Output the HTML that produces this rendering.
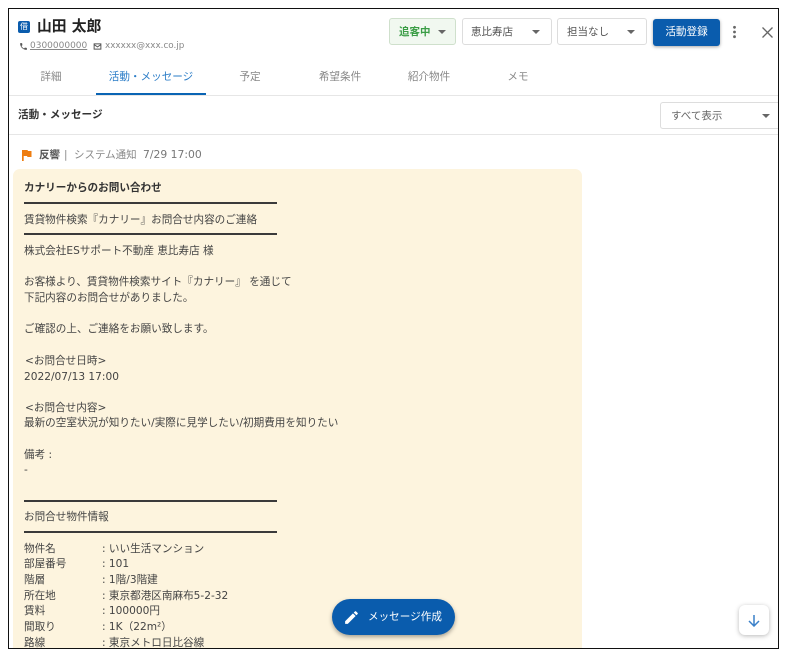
<!DOCTYPE html>
<html lang="ja"><head><meta charset="utf-8">
<style>
html,body{margin:0;padding:0;background:#fff}
body{width:787px;height:657px;position:relative;overflow:hidden;font-family:"DejaVu Sans","Noto Sans CJK JP",sans-serif;color:#333}
.a{position:absolute;white-space:nowrap}
#f{position:absolute;left:8px;top:8px;width:769px;height:639px;border:1.5px solid #111;overflow:hidden}
.sel{position:absolute;top:18px;height:27px;box-sizing:border-box;border:1px solid #ddd;border-radius:3px;background:#fff;font-size:10.5px;line-height:26px;color:#555;padding-left:8px}
.car{position:absolute;width:0;height:0;border-left:4px solid transparent;border-right:4px solid transparent;border-top:4px solid #666}
.tab{position:absolute;top:69px;font-size:10.6px;line-height:16px;color:#888;transform:translateX(-50%);white-space:nowrap}
.hr{position:absolute;height:1px;background:#e6e6e6}
.rule{position:absolute;left:24px;width:253px;height:2px;background:#3a3a3a}
#msg div{position:absolute;left:24px;font-size:10.6px;line-height:16px;color:#444;white-space:pre}
</style></head><body>
<div class="a" style="left:13px;top:169px;width:569px;height:480px;background:#fdf4de;border-radius:7px 7px 0 0"></div>

<div class="a" style="left:18px;top:21px;width:12px;height:12px;background:#0a5cad;border-radius:2px;color:#fff;font-size:8px;line-height:12px;text-align:center">借</div>
<div class="a" style="left:37px;top:17px;font-size:14.800px;line-height:20px;font-weight:bold;color:#222">山田 太郎</div>
<svg class="a" style="left:19px;top:42px" width="9" height="9" viewBox="0 0 24 24"><path fill="#555" d="M6.6 10.8c1.4 2.8 3.8 5.100 6.600 6.600l2.200-2.200c.3-.3.700-.4 1-.2 1.100.4 2.300.6 3.600.6.600 0 1 .4 1 1V20c0 .6-.4 1-1 1C10.600 21 3 13.400 3 4c0-.6.400-1 1-1h3.500c.6 0 1 .4 1 1 0 1.300.2 2.500.6 3.600.1.300 0 .7-.2 1z"/></svg>
<div class="a" style="left:30px;top:39px;font-size:9px;line-height:14px;color:#888;text-decoration:underline">0300000000</div>
<svg class="a" style="left:93px;top:42px" width="9" height="9" viewBox="0 0 24 24"><path fill="none" stroke="#555" stroke-width="2.600" d="M3 5h18v14H3zM3 7l9 6 9-6"/></svg>
<div class="a" style="left:105px;top:39px;font-size:8.800px;line-height:14px;color:#888">xxxxxx@xxx.co.jp</div>

<div class="sel" style="left:389px;width:67px;background:#f1f8f0;border-color:#cfe0cc;color:#3a9d45;font-weight:bold;padding-left:9px">追客中</div>
<div class="car" style="left:438px;top:30px"></div>
<div class="sel" style="left:462px;width:90px">恵比寿店</div>
<div class="car" style="left:532px;top:30px"></div>
<div class="sel" style="left:557px;width:90px;padding-left:9px">担当なし</div>
<div class="car" style="left:627px;top:30px"></div>
<div class="a" style="left:653px;top:19px;width:67px;height:27px;background:#0a5cad;border-radius:3px;color:#fff;font-size:10.600px;line-height:26px;text-align:center;box-shadow:0 1px 3px rgba(0,0,0,.35)">活動登録</div>
<svg class="a" style="left:730px;top:25px" width="9" height="15"><circle cx="4.500" cy="2.300" r="1.400" fill="#666"/><circle cx="4.500" cy="7" r="1.400" fill="#666"/><circle cx="4.500" cy="11.700" r="1.400" fill="#666"/></svg>
<svg class="a" style="left:761px;top:26px" width="13" height="13"><path d="M1.500 1.500l10 10M11.500 1.500l-10 10" stroke="#666" stroke-width="1.300" fill="none"/></svg>

<div class="tab" style="left:51px">詳細</div>
<div class="tab" style="left:151px;color:#2a7cc7">活動・メッセージ</div>
<div class="a" style="left:96px;top:93px;width:110px;height:2px;background:#0a64b4"></div>
<div class="tab" style="left:250px">予定</div>
<div class="tab" style="left:340px">希望条件</div>
<div class="tab" style="left:429px">紹介物件</div>
<div class="tab" style="left:518px">メモ</div>
<div class="hr" style="left:9px;top:95px;width:769px"></div>

<div class="a" style="left:18px;top:107px;font-size:10.600px;line-height:16px;font-weight:bold;color:#333">活動・メッセージ</div>
<div class="a" style="left:660px;top:102px;width:118px;height:27px;box-sizing:border-box;border:1px solid #ddd;border-right:0;border-radius:3px 0 0 3px;font-size:10.500px;line-height:26px;color:#666;padding-left:10px">すべて表示</div>
<div class="car" style="left:762px;top:114px"></div>
<div class="hr" style="left:9px;top:134px;width:769px"></div>

<svg class="a" style="left:21.500px;top:150px" width="10" height="11" viewBox="0 0 10 11"><path fill="#ee7d11" d="M0 0H5.500L6 1H9.500V7H5.500L5 6H1.700V11H0z"/></svg>
<div class="a" style="left:39px;top:146.500px;font-size:10.500px;line-height:16px;color:#666"><b style="font-weight:bold;color:#555">反響</b><span style="position:absolute;left:25px;top:0;color:#888">|</span><span style="position:absolute;left:35px;top:0;color:#888">システム通知</span><span style="position:absolute;left:104px;top:0;color:#777;font-size:10.800px">7/29 17:00</span></div>

<div id="msg">
<div style="top:180px;font-weight:bold;color:#333">カナリーからのお問い合わせ</div>
<span class="rule" style="top:202px"></span>
<div style="top:212px">賃貸物件検索『カナリー』お問合せ内容のご連絡</div>
<span class="rule" style="top:233px"></span>
<div style="top:243px">株式会社ESサポート不動産 恵比寿店 様</div>
<div style="top:274px">お客様より、賃貸物件検索サイト『カナリー』 を通じて</div>
<div style="top:290px">下記内容のお問合せがありました。</div>
<div style="top:321px">ご確認の上、ご連絡をお願い致します。</div>
<div style="top:353px;left:25px">&lt;お問合せ日時&gt;</div>
<div style="top:369px">2022/07/13 17:00</div>
<div style="top:400px;left:25px">&lt;お問合せ内容&gt;</div>
<div style="top:415px">最新の空室状況が知りたい/実際に見学したい/初期費用を知りたい</div>
<div style="top:447px">備考 :</div>
<div style="top:462px">-</div>
<span class="rule" style="top:500px"></span>
<div style="top:509px">お問合せ物件情報</div>
<span class="rule" style="top:531px"></span>
<div style="top:541px">物件名</div><div style="top:541px;left:102px">: いい生活マンション</div>
<div style="top:556px">部屋番号</div><div style="top:556px;left:102px">: 101</div>
<div style="top:572px">階層</div><div style="top:572px;left:102px">: 1階/3階建</div>
<div style="top:588px">所在地</div><div style="top:588px;left:102px">: 東京都港区南麻布5-2-32</div>
<div style="top:603px">賃料</div><div style="top:603px;left:102px">: 100000円</div>
<div style="top:619px">間取り</div><div style="top:619px;left:102px">: 1K（22m²）</div>
<div style="top:635px">路線</div><div style="top:635px;left:102px">: 東京メトロ日比谷線</div>
</div>

<div class="a" style="left:332px;top:599px;width:123px;height:36px;background:#0a5cad;border-radius:18px;box-shadow:0 2px 4px rgba(0,0,0,.35)"></div>
<svg class="a" style="left:343px;top:609px" width="17" height="17" viewBox="0 0 24 24"><path fill="#fff" d="M3 17.250V21h3.750L17.800 9.940l-3.750-3.750L3 17.250zM20.700 7.040a1 1 0 0 0 0-1.410l-2.340-2.340a1 1 0 0 0-1.410 0l-1.830 1.830 3.750 3.750 1.830-1.830z"/></svg>
<div class="a" style="left:368px;top:609px;font-size:10.600px;line-height:16px;color:#fff">メッセージ作成</div>

<div class="a" style="left:739px;top:605px;width:30px;height:30px;background:#fff;border-radius:6px;box-shadow:0 1px 5px rgba(0,0,0,.28)"></div>
<svg class="a" style="left:747px;top:614px" width="14" height="13" viewBox="0 0 14 13"><path d="M7 1v11M2 7l5 5 5-5" fill="none" stroke="#3a80c9" stroke-width="1.500"/></svg>

<div id="f"></div>
</body></html>
